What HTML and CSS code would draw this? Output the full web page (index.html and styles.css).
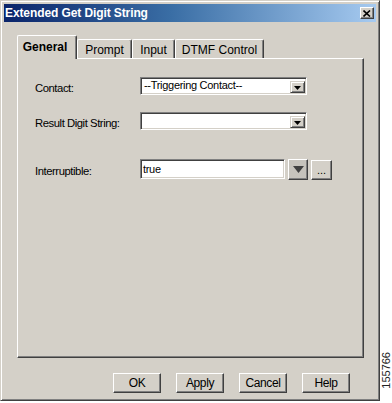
FILE: index.html
```html
<!DOCTYPE html>
<html>
<head>
<meta charset="utf-8">
<link rel="stylesheet" href="styles.css">
</head>
<body>
<div class="window">
  <div class="titlebar">
    <span class="title">Extended Get Digit String</span>
    <span class="close"><svg width="8" height="7" viewBox="0 0 8 7"><path d="M0.5 0.5 L7 6.5 M7 0.5 L0.5 6.5" stroke="#000" stroke-width="1.6" fill="none"/></svg></span>
  </div>
  <div class="content">
    <div class="tabs">
      <div class="tab active">General</div>
      <div class="tab t-prompt">Prompt</div>
      <div class="tab t-input">Input</div>
      <div class="tab t-dtmf">DTMF Control</div>
    </div>
    <div class="panel">
      <div class="row r1">
        <span class="label">Contact:</span>
        <div class="combo"><span class="combo-text">--Triggering Contact--</span><span class="drop"><svg width="7" height="4" viewBox="0 0 7 4"><path d="M0 0 H7 L3.5 4 Z" fill="#000"/></svg></span></div>
      </div>
      <div class="row r2">
        <span class="label">Result Digit String:</span>
        <div class="combo"><span class="combo-text"></span><span class="drop"><svg width="7" height="4" viewBox="0 0 7 4"><path d="M0 0 H7 L3.5 4 Z" fill="#000"/></svg></span></div>
      </div>
      <div class="row r3">
        <span class="label">Interruptible:</span>
        <div class="field">true</div>
        <div class="bigdrop"><svg width="11" height="7" viewBox="0 0 11 7"><path d="M0 0 H11 L5.5 7 Z" fill="#404040"/></svg></div>
        <div class="dots">...</div>
      </div>
    </div>
    <div class="buttons">
      <div class="btn">OK</div>
      <div class="btn">Apply</div>
      <div class="btn">Cancel</div>
      <div class="btn">Help</div>
    </div>
  </div>
</div>
<div class="side"><span class="figno">155766</span></div>
</body>
</html>
```
FILE: styles.css
```css
html, body {
  margin: 0;
  padding: 0;
  background: #ffffff;
}
body {
  display: flex;
  width: 392px;
  height: 403px;
  font-family: "Liberation Sans", Arial, sans-serif;
  color: #000;
}
.window {
  width: 380px;
  height: 401px;
  box-sizing: border-box;
  background: #d4d0c8;
  border: 1px solid;
  border-color: #d4d0c8 #404040 #404040 #d4d0c8;
  box-shadow: inset 1px 1px #ffffff, inset -1px -1px #808080;
  padding: 3px;
  display: flex;
  flex-direction: column;
}
.titlebar {
  height: 18px;
  flex: none;
  background: linear-gradient(to right, #0a246a 0%, #3a6ea5 45%, #a6caf0 100%);
  display: flex;
  align-items: center;
  justify-content: space-between;
  padding-left: 1px;
}
.title {
  color: #fff;
  font-weight: bold;
  font-size: 12px;
  letter-spacing: -0.1px;
  line-height: 14px;
}
.close {
  width: 14px;
  height: 12px;
  box-sizing: border-box;
  margin-right: 2px;
  background: #d4d0c8;
  border: 1px solid;
  border-color: #ffffff #404040 #404040 #ffffff;
  box-shadow: inset -1px -1px #808080;
  display: flex;
  align-items: center;
  justify-content: center;
}
.close svg { display: block; }
.content {
  flex: 1;
  padding: 13px 12px 0 13px;
  display: flex;
  flex-direction: column;
}
.tabs {
  display: flex;
  align-items: flex-end;
  height: 23px;
}
.tab {
  box-sizing: border-box;
  height: 19px;
  font-size: 12px;
  line-height: 16px;
  background: #d4d0c8;
  border-top: 1px solid #ffffff;
  border-left: 1px solid #ffffff;
  border-right: 1px solid #404040;
  box-shadow: inset -1px 0 #808080;
  border-radius: 2px 2px 0 0;
  text-align: center;
  padding-top: 2px;
}
.tab.active {
  width: 60px;
  height: 24px;
  margin-bottom: -1px;
  position: relative;
  z-index: 1;
  font-weight: bold;
  padding-top: 3px;
  padding-right: 4px;
}
.t-prompt { width: 55px; }
.t-input { width: 43px; }
.t-dtmf { width: 89px; }
.panel {
  width: 347px;
  height: 300px;
  box-sizing: border-box;
  border: 1px solid;
  border-color: #ffffff #404040 #404040 #ffffff;
  box-shadow: inset -1px -1px #808080;
  padding: 0 0 0 17px;
  display: flex;
  flex-direction: column;
}
.row {
  display: flex;
  align-items: center;
}
.r1 { margin-top: 18px; height: 18px; }
.r2 { margin-top: 17px; height: 18px; }
.r3 { margin-top: 29px; height: 21px; }
.label {
  width: 105px;
  flex: none;
  font-size: 11.3px;
  letter-spacing: -0.45px;
  padding-top: 3px;
}
.r3 .label { padding-top: 2px; }
.combo {
  width: 167px;
  height: 18px;
  box-sizing: border-box;
  background: #fff;
  border: 1px solid;
  border-color: #808080 #ffffff #ffffff #808080;
  box-shadow: inset 1px 1px #404040, inset -1px -1px #d4d0c8;
  display: flex;
  align-items: flex-end;
  justify-content: space-between;
  padding: 0 1px 1px 3px;
}
.combo-text {
  font-size: 11px;
  letter-spacing: -0.3px;
  line-height: 15px;
  align-self: center;
}
.drop {
  width: 15px;
  height: 12px;
  box-sizing: border-box;
  background: #d4d0c8;
  border: 1px solid;
  border-color: #d4d0c8 #404040 #404040 #d4d0c8;
  box-shadow: inset 1px 1px #ffffff, inset -1px -1px #808080;
  display: flex;
  align-items: center;
  justify-content: center;
  padding-top: 1px;
}
.drop svg, .bigdrop svg { display: block; }
.field {
  width: 145px;
  height: 20px;
  box-sizing: border-box;
  background: #fff;
  border: 1px solid;
  border-color: #808080 #ffffff #ffffff #808080;
  box-shadow: inset 1px 1px #404040, inset -1px -1px #d4d0c8;
  font-size: 11px;
  letter-spacing: -0.3px;
  line-height: 18px;
  padding-left: 2px;
  margin-top: -1px;
}
.bigdrop {
  width: 20px;
  height: 21px;
  box-sizing: border-box;
  margin-left: 3px;
  background: #c6c3bc;
  border: 1px solid;
  border-color: #ffffff #404040 #404040 #ffffff;
  box-shadow: inset -1px -1px #808080;
  display: flex;
  align-items: center;
  justify-content: center;
}
.dots {
  width: 21px;
  height: 20px;
  box-sizing: border-box;
  margin-left: 3px;
  background: #d4d0c8;
  border: 1px solid;
  border-color: #ffffff #404040 #404040 #ffffff;
  box-shadow: inset -1px -1px #808080;
  font-size: 11px;
  line-height: 19px;
  text-align: center;
  letter-spacing: 0;
}
.buttons {
  display: flex;
  justify-content: flex-end;
  gap: 15px;
  margin-top: 15px;
  margin-right: 14px;
}
.btn {
  width: 48px;
  height: 20px;
  box-sizing: border-box;
  background: #d4d0c8;
  border: 1px solid;
  border-color: #ffffff #404040 #404040 #ffffff;
  box-shadow: inset -1px -1px #808080;
  font-size: 12px;
  letter-spacing: -0.4px;
  line-height: 18px;
  text-align: center;
}
.side {
  flex: 1;
  display: flex;
  flex-direction: column;
  justify-content: flex-end;
  align-items: center;
  padding-bottom: 14px;
}
.figno {
  writing-mode: vertical-rl;
  transform: rotate(180deg);
  font-size: 11px;
  line-height: 11px;
  color: #222;
}
```
